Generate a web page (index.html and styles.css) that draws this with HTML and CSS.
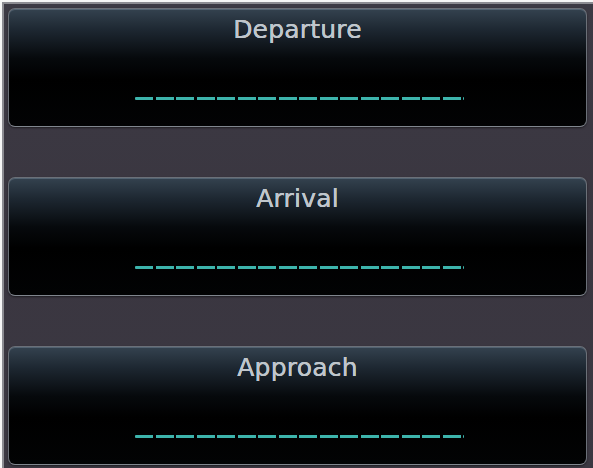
FILE: index.html
```html
<!DOCTYPE html>
<html>
<head>
<meta charset="utf-8">
<link rel="stylesheet" href="styles.css">
</head>
<body>
<div class="frame">
  <div class="btn">
    <div class="label">Departure</div>
    <div class="dashes"></div>
  </div>
  <div class="btn">
    <div class="label">Arrival</div>
    <div class="dashes"></div>
  </div>
  <div class="btn">
    <div class="label">Approach</div>
    <div class="dashes"></div>
  </div>
</div>
</body>
</html>
```
FILE: styles.css
```css
html, body {
  margin: 0;
  padding: 0;
  background: #f6f6f6;
}
body {
  width: 593px;
  height: 468px;
  overflow: hidden;
}
.frame {
  margin: 2px 0 0 2px;
  height: 461px;
  width: 579px;
  padding: 4px 6px 3px 4px;
  box-sizing: content-box;
  background: linear-gradient(180deg, #3c3a44 0%, #3a3640 50%, #3b3842 100%);
  border-left: 2px solid #8c8c92;
  border-top: 2px solid #8c8c92;
  display: flex;
  flex-direction: column;
  gap: 50px;
}
.btn {
  height: 119px;
  box-sizing: border-box;
  border: 1.5px solid #6b7078;
  border-bottom-color: #80868e;
  border-radius: 7px;
  background: linear-gradient(180deg, #34424f 0%, #1d2731 18%, #06090c 42%, #000 60%, #020304 100%);
  box-shadow: inset 0 1px 0 rgba(140,160,180,0.35), 0 1px 2px rgba(0,0,0,0.5);
  display: flex;
  flex-direction: column;
  align-items: center;
}
.label {
  font-family: "DejaVu Sans", "Liberation Sans", sans-serif;
  font-size: 25px;
  color: #bfc6cc;
  line-height: 30px;
  margin-top: 6px;
  letter-spacing: 0.2px;
  text-shadow: 0 0 0.6px #bfc6cc, 0 0 0.6px #bfc6cc;
}
.dashes {
  margin-top: 52px;
  margin-left: 3px;
  width: 329px;
  height: 3px;
  background: repeating-linear-gradient(90deg, #3db4ac 0px, #3db4ac 18px, transparent 18px, transparent 20.5px);
  border-radius: 1px;
}
```
